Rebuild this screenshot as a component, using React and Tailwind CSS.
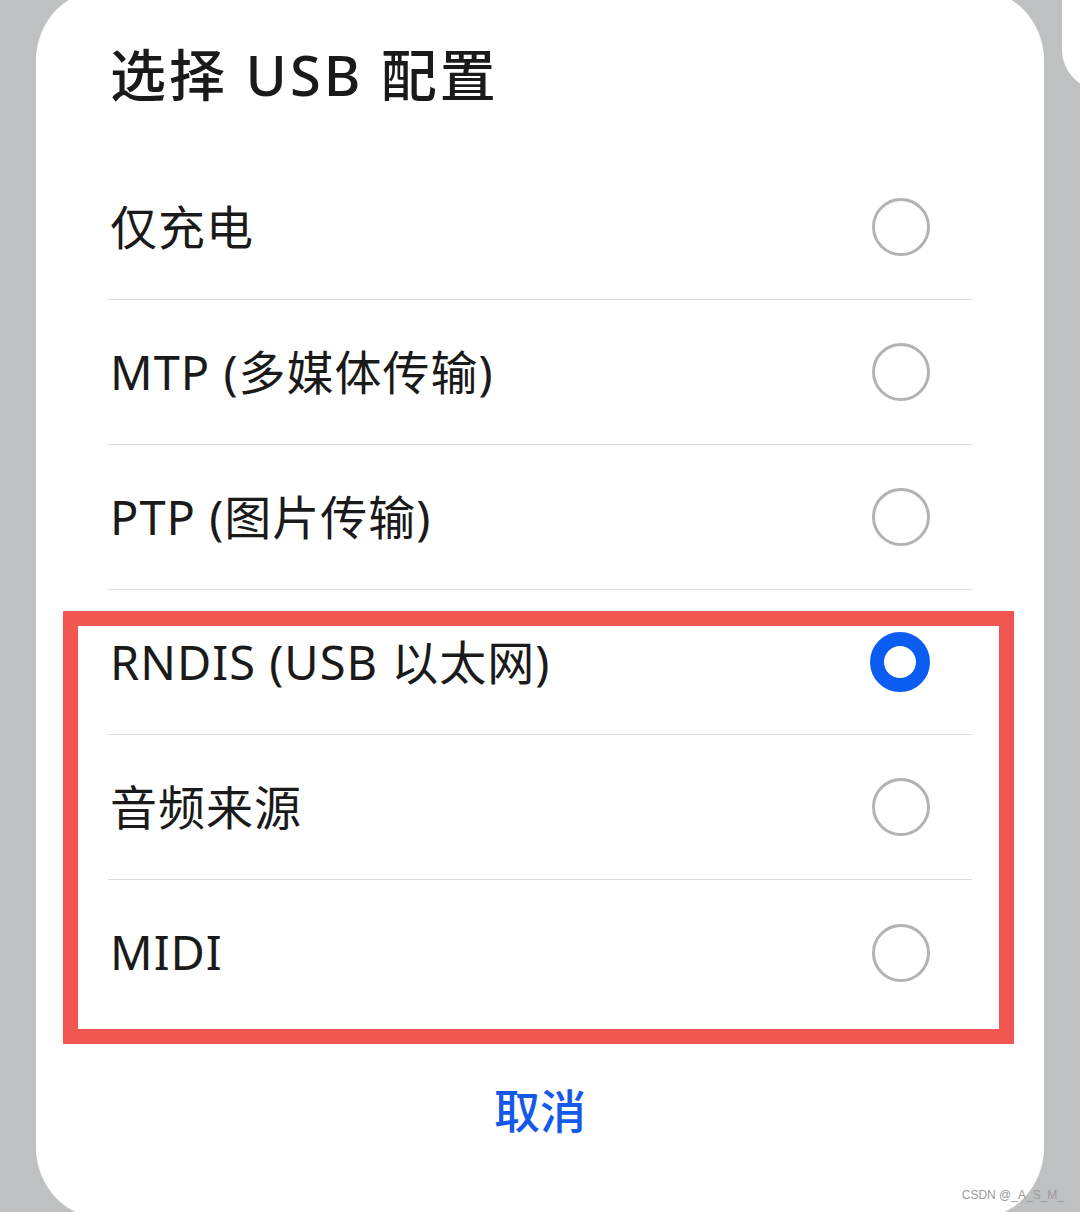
import React from 'react'

const options = [
  { label: '仅充电', selected: false },
  { label: 'MTP (多媒体传输)', selected: false },
  { label: 'PTP (图片传输)', selected: false },
  { label: 'RNDIS (USB 以太网)', selected: true },
  { label: '音频来源', selected: false },
  { label: 'MIDI', selected: false },
]

const Radio = ({ selected }) =>
  selected ? (
    <span className="block h-[60px] w-[60px] rounded-full border-[14px] border-[#0b5cf0] bg-white" />
  ) : (
    <span className="block h-[58px] w-[58px] rounded-full border-[3px] border-[#b3b3b3] bg-white" />
  )

const App = () => {
  return (
    <div
      className="relative h-[1212px] w-[1080px] overflow-hidden bg-[#bfc0c2]"
      style={{ fontFamily: '"Noto Sans", "Noto Sans CJK SC", sans-serif' }}
    >
      {/* edge of the next panel on the right */}
      <div className="absolute left-[1062px] top-[-100px] h-[190px] w-[80px] rounded-[40px] bg-white" />

      <div className="ml-9 mt-[-12px] h-[1232px] w-[1008px] rounded-[72px] bg-white">
        <div className="flex h-[167px] items-center pl-[74px] pt-[4px] text-[56px] font-medium tracking-[3px] text-[#1a1a1a]">
          选择 USB 配置
        </div>

        <div className="px-[72px]">
          {options.map((opt, i) => (
            <div
              key={opt.label}
              className={
                'flex h-[145px] items-center justify-between pl-[2px] pr-[42px] ' +
                (i < options.length - 1 ? 'border-b border-[#dcdcdc]' : '')
              }
            >
              <span className="text-[47px] tracking-[1px] text-[#1a1a1a]">{opt.label}</span>
              <Radio selected={opt.selected} />
            </div>
          ))}
        </div>

        <div className="flex h-[170px] items-center justify-center">
          <span className="text-[46px] font-medium text-[#1559e8]">取消</span>
        </div>
      </div>

      {/* red highlight around the last three options */}
      <div className="absolute left-[63px] top-[611px] h-[433px] w-[951px] border-[15px] border-[#f15650]" />

      <div
        className="absolute bottom-[8px] right-[16px] text-[12px] text-[#9a9a9a]"
        style={{ fontFamily: '"Liberation Sans", sans-serif' }}
      >
        CSDN @_A_S_M_
      </div>
    </div>
  )
}

export default App
